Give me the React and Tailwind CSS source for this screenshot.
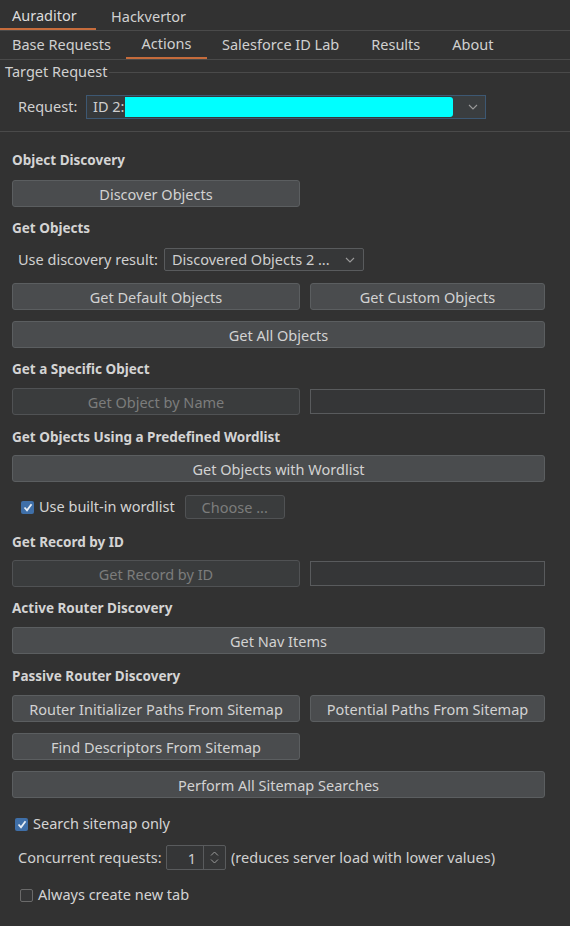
import React from 'react';

const font = { fontFamily: '"Noto Sans", "Open Sans", sans-serif' };

const Chevron = ({ className = '' }) => (
  <svg width="10" height="6" viewBox="0 0 10 6" className={className}>
    <path d="M1 1l4 4 4-4" fill="none" stroke="#9a9a9a" strokeWidth="1.1" />
  </svg>
);

const Header = ({ children, className = '' }) => (
  <div className={`h-[20px] flex items-center text-[13.5px] font-bold text-[#d4d4d4] ${className}`}>{children}</div>
);

const Btn = ({ children, disabled, className = '' }) => (
  <div
    className={`h-[27px] flex items-center justify-center pt-[2px] rounded-[3px] border text-[14.5px] ${
      disabled
        ? 'bg-[#3a3c3d] border-[#505254] text-[#7c7c7c]'
        : 'bg-[#4a4c4e] border-[#5b5e60] text-[#d2d2d2]'
    } ${className}`}
  >
    {children}
  </div>
);

const Field = ({ className = '' }) => (
  <div className={`h-[25px] bg-[#353637] border border-[#595b5d] ${className}`} />
);

const Check = ({ checked }) =>
  checked ? (
    <span className="w-[13px] h-[13px] rounded-[2px] bg-[#3f6fa8] flex items-center justify-center">
      <svg width="10" height="9" viewBox="0 0 10 9">
        <path d="M1.5 4.5l2.5 2.8 4.5-6" fill="none" stroke="#e8eef5" strokeWidth="1.8" />
      </svg>
    </span>
  ) : (
    <span className="block w-[13px] h-[13px] rounded-[2px] border border-[#6a6a6a] bg-[#353637]" />
  );

export default function App() {
  return (
    <div className="w-[570px] h-[926px] bg-[#323232] text-[#d0d0d0] overflow-hidden text-[14.5px]" style={font}>
      {/* top tabs */}
      <div className="h-[31px] flex border-b border-[#4a4a4a]">
        <div className="w-[96px] flex items-center pl-[12px] pt-[3px] border-b-2 border-[#c66c3c] text-[#dcdcdc]">Auraditor</div>
        <div className="flex items-center pl-[15px] pt-[3px] text-[#d0d0d0]">Hackvertor</div>
      </div>
      <div className="h-[29px] flex border-b border-[#4a4a4a] text-[#d0d0d0]">
        <div className="w-[126px] flex items-center pl-[12px]">Base Requests</div>
        <div className="w-[81px] flex items-center justify-center border-b-2 border-[#c66c3c]">Actions</div>
        <div className="flex items-center pl-[15px]">Salesforce ID Lab</div>
        <div className="flex items-center pl-[32px]">Results</div>
        <div className="flex items-center pl-[32px]">About</div>
      </div>

      {/* target request */}
      <div className="border-b border-[#4a4a4a] pb-[12px]">
        <div className="h-[23px] flex items-center">
          <span className="pl-[5px] pr-[2px] text-[#d0d0d0]">Target Request</span>
          <div className="flex-1 h-px bg-[#4a4a4a] mt-[1px]" />
        </div>
        <div className="mt-[12px] flex items-center">
          <span className="pl-[18px] w-[86px] text-[#d0d0d0]">Request:</span>
          <div className="w-[400px] h-[24px] flex items-center border border-[#3d5873] bg-[#36393b]">
            <span className="pl-[6px] pr-[1px] text-[#cfcfcf]">ID 2:</span>
            <div className="w-[328px] h-[20px] bg-[#00ffff] rounded-r-[3px]" />
            <div className="flex-1 flex items-center justify-center pl-[8px] h-full bg-[#3a3d3f]">
              <Chevron />
            </div>
          </div>
        </div>
      </div>

      {/* actions */}
      <div className="px-[12px] w-[557px]">
        <Header className="mt-[18px]">Object Discovery</Header>
        <Btn className="mt-[10px] w-[288px]">Discover Objects</Btn>

        <Header className="mt-[11px]">Get Objects</Header>
        <div className="mt-[10px] flex items-center">
          <span className="pl-[6px] w-[152px] text-[#d0d0d0]">Use discovery result:</span>
          <div className="w-[200px] h-[23px] flex items-center justify-between border border-[#595b5d] rounded-[2px] bg-[#363738] pl-[7px] pr-[8px] text-[#cfcfcf]">
            <span>Discovered Objects 2 ...</span>
            <Chevron />
          </div>
        </div>
        <div className="mt-[12px] flex gap-[10px]">
          <Btn className="w-[288px]">Get Default Objects</Btn>
          <Btn className="flex-1">Get Custom Objects</Btn>
        </div>
        <Btn className="mt-[11px]">Get All Objects</Btn>

        <Header className="mt-[11px]">Get a Specific Object</Header>
        <div className="mt-[9px] flex items-center gap-[10px]">
          <Btn disabled className="w-[288px]">Get Object by Name</Btn>
          <Field className="flex-1" />
        </div>

        <Header className="mt-[12px]">Get Objects Using a Predefined Wordlist</Header>
        <Btn className="mt-[8px]">Get Objects with Wordlist</Btn>
        <div className="mt-[13px] h-[24px] flex items-center">
          <span className="ml-[9px]"><Check checked /></span>
          <span className="ml-[5px] text-[#d4d4d4]">Use built-in wordlist</span>
          <Btn disabled className="ml-[10px] w-[100px] !h-[24px]">Choose ...</Btn>
        </div>

        <Header className="mt-[13px]">Get Record by ID</Header>
        <div className="mt-[8px] flex items-center gap-[10px]">
          <Btn disabled className="w-[288px]">Get Record by ID</Btn>
          <Field className="flex-1" />
        </div>

        <Header className="mt-[11px]">Active Router Discovery</Header>
        <Btn className="mt-[9px]">Get Nav Items</Btn>

        <Header className="mt-[12px]">Passive Router Discovery</Header>
        <div className="mt-[9px] flex gap-[10px]">
          <Btn className="w-[288px]">Router Initializer Paths From Sitemap</Btn>
          <Btn className="flex-1">Potential Paths From Sitemap</Btn>
        </div>
        <Btn className="mt-[11px] w-[288px]">Find Descriptors From Sitemap</Btn>
        <Btn className="mt-[11px]">Perform All Sitemap Searches</Btn>

        <div className="mt-[16px] h-[20px] flex items-center">
          <span className="ml-[3px]"><Check checked /></span>
          <span className="ml-[5px] text-[#d4d4d4]">Search sitemap only</span>
        </div>
        <div className="mt-[11px] h-[25px] flex items-center text-[#d0d0d0]">
          <span className="pl-[6px] w-[154px]">Concurrent requests:</span>
          <div className="w-[60px] h-[25px] flex border border-[#595b5d] rounded-[2px] bg-[#353637]">
            <div className="w-[36px] flex items-center justify-end pr-[7px] pt-[2px] text-[#cfcfcf]">1</div>
            <div className="flex-1 border-l border-[#595b5d] flex flex-col items-center justify-center gap-[3px]">
              <svg width="9" height="5" viewBox="0 0 9 5"><path d="M1 4.5l3.5-3.5 3.5 3.5" fill="none" stroke="#9a9a9a" strokeWidth="1" /></svg>
              <svg width="9" height="5" viewBox="0 0 9 5"><path d="M1 0.5l3.5 3.5 3.5-3.5" fill="none" stroke="#9a9a9a" strokeWidth="1" /></svg>
            </div>
          </div>
          <span className="ml-[5px]">(reduces server load with lower values)</span>
        </div>
        <div className="mt-[15px] h-[20px] flex items-center">
          <span className="ml-[8px]"><Check /></span>
          <span className="ml-[5px] text-[#d4d4d4]">Always create new tab</span>
        </div>
      </div>
    </div>
  );
}
